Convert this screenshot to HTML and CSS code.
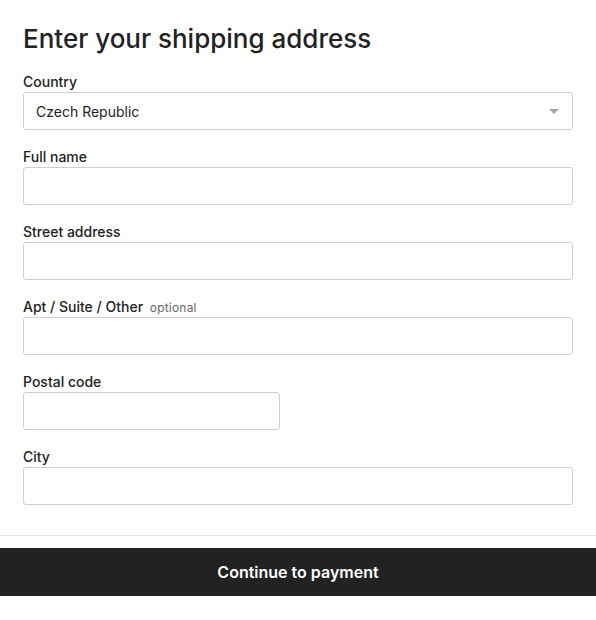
FILE: index.html
```html
<!DOCTYPE html>
<html>
<head>
<meta charset="utf-8">
<link rel="stylesheet" href="styles.css">
</head>
<body>
<div class="page">
  <form class="form">
    <h1 class="title">Enter your shipping address</h1>
    <div class="field">
      <label class="label">Country</label>
      <div class="select">
        <span class="select-value">Czech Republic</span>
        <span class="caret"></span>
      </div>
    </div>
    <div class="field">
      <label class="label">Full name</label>
      <div class="input"></div>
    </div>
    <div class="field">
      <label class="label">Street address</label>
      <div class="input"></div>
    </div>
    <div class="field">
      <label class="label">Apt / Suite / Other <span class="optional">optional</span></label>
      <div class="input"></div>
    </div>
    <div class="field">
      <label class="label">Postal code</label>
      <div class="input half"></div>
    </div>
    <div class="field last">
      <label class="label">City</label>
      <div class="input"></div>
    </div>
  </form>
  <div class="divider"></div>
  <button class="submit" type="button">Continue to payment</button>
</div>
</body>
</html>
```
FILE: styles.css
```css
* { box-sizing: border-box; }
html, body { margin: 0; padding: 0; background: #fff; }
body { font-family: Inter, "Noto Sans", sans-serif; color: #222; }
.page { width: 596px; }
.form { padding: 22px 23px 0 23px; display: flex; flex-direction: column; }
.title { margin: 0 0 18px 0; font-size: 26px; font-weight: 500; line-height: 34px; letter-spacing: 0; color: #222; }
.field { display: flex; flex-direction: column; margin-bottom: 19px; }
.field.last { margin-bottom: 30px; }
.label { font-size: 14px; font-weight: 500; line-height: 16px; height: 18px; padding-bottom: 2px; color: #222; }
.optional { font-size: 12px; font-weight: 400; color: #666; margin-left: 3px; letter-spacing: 0.2px; }
.input, .select { height: 38px; border: 1px solid #cfcfcf; border-radius: 3px; background: #fff; width: 550px; }
.input.half { width: 257px; }
.select { display: flex; align-items: center; justify-content: space-between; padding: 0 13px 0 12px; }
.select-value { font-size: 14px; color: #222; }
.caret { width: 0; height: 0; border-left: 5px solid transparent; border-right: 5px solid transparent; border-top: 5px solid #a8a8a8; }
.divider { height: 1px; background: #e1e1e1; margin-bottom: 12px; }
.submit { display: block; width: 596px; height: 48px; border: 0; margin: 0; background: #222; color: #fff; font-family: Inter, "Noto Sans", sans-serif; font-size: 16px; font-weight: 600; cursor: pointer; }
```
